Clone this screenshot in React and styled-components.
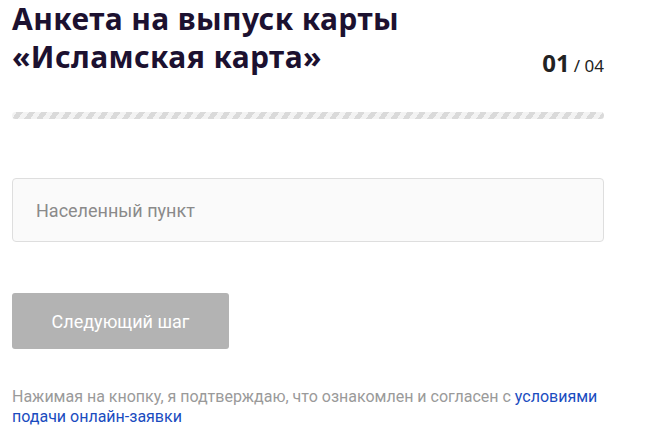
import styled, { createGlobalStyle } from "styled-components";

const GlobalStyle = createGlobalStyle`
  body {
    margin: 0;
    background: #ffffff;
    font-family: Roboto, "Liberation Sans", sans-serif;
  }
`;

const Page = styled.div`
  width: 592px;
  padding: 0 12px;
`;

const Header = styled.div`
  display: flex;
  justify-content: space-between;
  align-items: flex-end;
`;

const Title = styled.h1`
  margin: 0;
  font-family: "Noto Sans", sans-serif;
  font-weight: 700;
  font-size: 30px;
  line-height: 38px;
  color: #1c1130;
  letter-spacing: 0.4px;
`;

const Counter = styled.div`
  font-family: "Noto Sans", sans-serif;
  color: #222;
  margin-bottom: -3px;
  b {
    font-size: 24px;
    font-weight: 700;
  }
  span {
    font-size: 17px;
  }
`;

const Progress = styled.div`
  margin-top: 36px;
  height: 7px;
  border-radius: 4px;
  background: repeating-linear-gradient(
    -55deg,
    #dadada 0px,
    #dadada 5px,
    #f3f3f3 5px,
    #f3f3f3 10px
  );
`;

const Field = styled.input`
  display: block;
  box-sizing: border-box;
  width: 100%;
  height: 64px;
  margin-top: 59px;
  padding: 0 23px;
  border: 1px solid #dedede;
  border-radius: 4px;
  background: #fafafa;
  font-family: Roboto, sans-serif;
  font-size: 18px;
  color: #333;
  &::placeholder {
    color: #8a8a8a;
  }
`;

const NextButton = styled.button`
  display: block;
  margin-top: 51px;
  width: 217px;
  height: 56px;
  border: none;
  border-radius: 3px;
  background: #b3b3b3;
  color: #fff;
  font-family: Roboto, sans-serif;
  font-size: 18px;
`;

const Note = styled.p`
  margin: 38px 0 0;
  font-family: Roboto, sans-serif;
  font-size: 16px;
  line-height: 20px;
  color: #9a9a9a;
  a {
    color: #1a4cc0;
    text-decoration: none;
  }
`;

export default function App() {
  return (
    <Page>
      <GlobalStyle />
      <Header>
        <Title>
          Анкета на выпуск карты
          <br />
          «Исламская карта»
        </Title>
        <Counter>
          <b>01</b> <span>/ 04</span>
        </Counter>
      </Header>
      <Progress />
      <Field placeholder="Населенный пункт" />
      <NextButton>Следующий шаг</NextButton>
      <Note>
        Нажимая на кнопку, я подтверждаю, что ознакомлен и согласен с{" "}
        <a href="#">условиями подачи онлайн-заявки</a>
      </Note>
    </Page>
  );
}
